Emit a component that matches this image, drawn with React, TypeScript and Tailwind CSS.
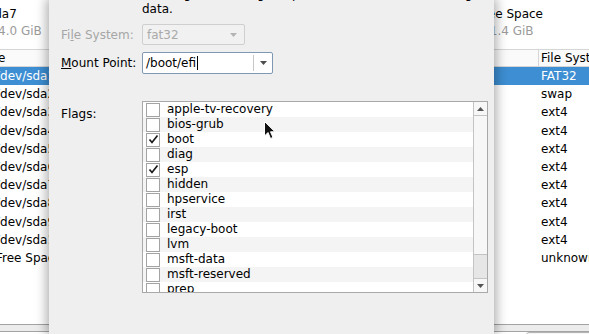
import React from 'react';

const flags = [
    { name: 'apple-tv-recovery', on: false },
    { name: 'bios-grub', on: false },
    { name: 'boot', on: true },
    { name: 'diag', on: false },
    { name: 'esp', on: true },
    { name: 'hidden', on: false },
    { name: 'hpservice', on: false },
    { name: 'irst', on: false },
    { name: 'legacy-boot', on: false },
    { name: 'lvm', on: false },
    { name: 'msft-data', on: false },
    { name: 'msft-reserved', on: false },
    { name: 'prep', on: false },
];

const partitions = [
    { name: '/dev/sda1', fs: 'FAT32', selected: true },
    { name: '/dev/sda2', fs: 'swap' },
    { name: '/dev/sda3', fs: 'ext4' },
    { name: '/dev/sda4', fs: 'ext4' },
    { name: '/dev/sda5', fs: 'ext4' },
    { name: '/dev/sda6', fs: 'ext4' },
    { name: '/dev/sda7', fs: 'ext4' },
    { name: '/dev/sda8', fs: 'ext4' },
    { name: '/dev/sda9', fs: 'ext4' },
    { name: '/dev/sda10', fs: 'ext4' },
    { name: 'Free Space', fs: 'unknown' },
];

const Arrow = ({ color }: { color: string }) => (
    <svg width="7" height="4" viewBox="0 0 7 4">
        <path d="M0 0 L7 0 L3.5 4 Z" fill={color} />
    </svg>
);

const Check = () => (
    <svg width="11" height="11" viewBox="0 0 11 11">
        <path d="M1.5 5.5 L4 8.5 L9.5 1.5" fill="none" stroke="#1a1a1a" strokeWidth="1.7" />
    </svg>
);

const App: React.FC = () => {
    return (
        <div
            className="relative h-[334px] w-[589px] overflow-hidden bg-white text-[12px] text-black"
            style={{ fontFamily: '"DejaVu Sans", sans-serif' }}
        >
            {/* partition page behind the dialog */}
            <div className="flex h-full flex-col">
                <div className="flex h-[49px] justify-between pt-[6px] leading-[17px]">
                    <div className="ml-[-12px] whitespace-nowrap">
                        <div>sda7</div>
                        <div className="ml-[10px] text-[#9b9b9b]">4.0 GiB&nbsp;&nbsp;ext4</div>
                    </div>
                    <div className="mr-[46px] whitespace-nowrap">
                        <div>Free Space</div>
                        <div className="ml-[5px] text-[#9b9b9b]">21.4 GiB</div>
                    </div>
                </div>
                <div className="flex h-[18px] items-center border-y border-[#d6d6d6] bg-[#fafafa]">
                    <div className="w-[538px] shrink-0">
                        <span className="ml-[-30px]">Name</span>
                    </div>
                    <div className="h-full shrink-0 whitespace-nowrap border-l border-[#d6d6d6] pl-[2px] leading-[16px]">
                        File System
                    </div>
                </div>
                {partitions.map(p => (
                    <div
                        key={p.name}
                        className={`flex h-[18.2px] items-center ${p.selected ? 'bg-[#3d8ed2] text-white' : ''}`}
                    >
                        <div className="w-[541px] shrink-0 whitespace-nowrap">
                            <span className="ml-[-4px]">{p.name}</span>
                        </div>
                        <div className="shrink-0 whitespace-nowrap">{p.fs}</div>
                    </div>
                ))}
                <div className="flex-1" />
                <div className="mb-[2px] h-[8px] border-y border-[#a3a3a3] bg-[#ececec]" />
            </div>
            <div className="absolute bottom-[-10px] left-[526px] h-[12px] w-[80px] rounded-[3px] border border-[#b5b5b5] bg-[#f5f5f5]" />

            {/* edit partition dialog */}
            <div className="absolute left-[49px] top-0 h-[334px] w-[445px] overflow-hidden bg-[#efefef] shadow-[0_0_11px_2px_rgba(0,0,0,0.35)]">
                <div className="flex flex-col pl-[12px]">
                    <div className="ml-[81px] mt-[-13px] w-[346px] leading-[15px]">
                        Warning: Formatting the partition will erase all existing data.
                    </div>
                    <div className="mt-[7px] flex items-center">
                        <div className="w-[81px] text-[#a6a6a6]">
                            Fi<span className="underline">l</span>e System:
                        </div>
                        <div className="flex h-[21px] w-[103px] items-center justify-between rounded-[2px] border border-[#cfcfcf] bg-[#f1f1f1] pl-[4px] pr-[7px] text-[#a9a9a9]">
                            <span>fat32</span>
                            <Arrow color="#b4b4b4" />
                        </div>
                    </div>
                    <div className="mt-[7px] flex items-center">
                        <div className="w-[81px]">
                            <span className="underline">M</span>ount Point:
                        </div>
                        <div className="flex h-[22px] w-[131px] items-stretch rounded-[2px] border border-[#7f98b4] bg-white">
                            <div className="flex flex-1 items-center pl-[3px]">
                                <span>/boot/efi</span>
                                <span className="ml-[1px] h-[14px] w-[1px] bg-black" />
                            </div>
                            <div className="my-[2px] flex w-[19px] items-center justify-center border-l border-[#c6c6c6]">
                                <Arrow color="#4d4d4d" />
                            </div>
                        </div>
                    </div>
                    <div className="mt-[27px] flex items-start">
                        <div className="w-[81px] pt-[6px] leading-[15px]">Flags:</div>
                        <div className="flex h-[192px] w-[346px] overflow-hidden border border-[#a9a9a9] bg-white">
                            <div className="flex-1 overflow-hidden">
                                {flags.map((f, i) => (
                                    <div
                                        key={f.name}
                                        className={`flex h-[15px] items-center ${i % 2 === 1 ? 'bg-[#f4f4f4]' : 'bg-white'}`}
                                    >
                                        <div className="ml-[3px] flex h-[14px] w-[14px] items-center justify-center border border-[#a3a3a3] bg-white">
                                            {f.on && <Check />}
                                        </div>
                                        <span className="ml-[7px] leading-[15px]">{f.name}</span>
                                    </div>
                                ))}
                            </div>
                            <div className="flex w-[14px] flex-col border-l border-[#c4c4c4] bg-[#f7f7f7]">
                                <div className="flex h-[14px] items-center justify-center border-b border-[#c4c4c4]">
                                    <div className="rotate-180">
                                        <Arrow color="#555555" />
                                    </div>
                                </div>
                                <div className="flex-1" />
                                <div className="h-[24px] border-t border-[#c4c4c4] bg-[#e6e6e6]" />
                                <div className="flex h-[14px] items-center justify-center border-t border-[#c4c4c4]">
                                    <Arrow color="#555555" />
                                </div>
                            </div>
                        </div>
                    </div>
                </div>
            </div>

            {/* mouse pointer */}
            <svg className="absolute left-[264px] top-[121px]" width="12" height="19" viewBox="0 0 12 19">
                <path d="M0.5 0.5 L0.5 15 L4 11.5 L6.5 17.5 L9 16.5 L6.5 10.8 L11 10.8 Z" fill="#111" stroke="#fff" strokeWidth="1" />
            </svg>
        </div>
    );
};

export default App;
